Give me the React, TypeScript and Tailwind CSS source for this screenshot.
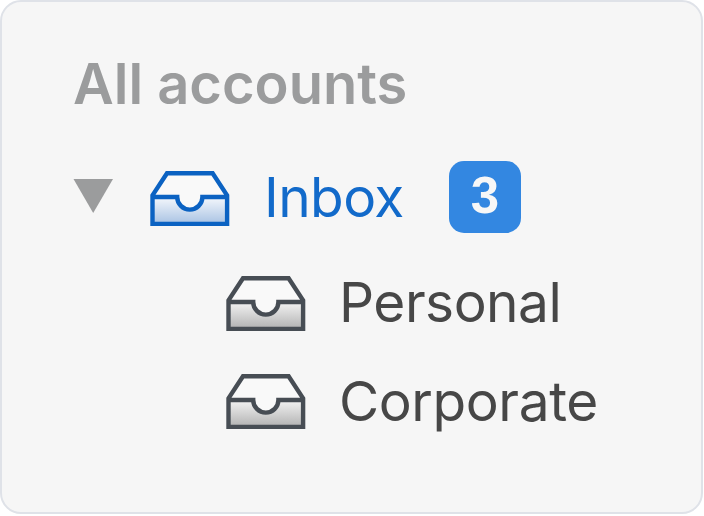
interface InboxIconProps {
	id: string;
	stroke: string;
	from: string;
	to: string;
}

interface Account {
	id: string;
	name: string;
	className: string;
}

const accounts: Account[] = [
	{
		id: 'personal',
		name: 'Personal',
		className: 'pb-1 tracking-[-0.5px]'
	},
	{
		id: 'corporate',
		name: 'Corporate',
		className: 'pb-0.5 tracking-[-0.4px]'
	}
];

function InboxIcon({ id, stroke, from, to }: InboxIconProps) {
	return (
		<svg viewBox="0 0 80 56" className="h-14 w-20 shrink-0" fill="none">
			<defs>
				<linearGradient id={id} x1="0" y1="26" x2="0" y2="53" gradientUnits="userSpaceOnUse">
					<stop offset="0" stopColor={from} />
					<stop offset="1" stopColor={to} />
				</linearGradient>
			</defs>
			<path d="M2.5 24.7 17 2.2h45.6l14.5 22.5V40H2.5Z" fill="#f9f9f9" />
			<path
				d="M2.5 26h24.7a12.6 12.6 0 0 0 25.2 0h24.7v26.9H2.5Z"
				fill={`url(#${id})`}
			/>
			<path
				d="M2.5 26h24.7a12.6 12.6 0 0 0 25.2 0h24.7M2.5 24.3v28.6h74.6V24.3L62.6 2.2H17L2.5 24.3Z"
				stroke={stroke}
				strokeWidth="4.4"
			/>
		</svg>
	);
}

export default function App() {
	return (
		<main className="h-[516px] w-[704px] bg-white font-['Inter',sans-serif]">
			<section className="h-[514px] w-[703px] rounded-[21px] border-2 border-[#dfe2e8] bg-[#f6f6f6] pt-[49px] pl-[71px]">
				<h1 className="h-[68px] text-[56px] leading-[67px] font-semibold whitespace-nowrap text-[#9b9c9d]">
					All accounts
				</h1>
				<div className="mt-[40px] flex h-[76px] items-center">
					<svg viewBox="0 0 40 34" className="mb-0.5 h-[34px] w-10 shrink-0">
						<path d="M0.5 0H40L20.2 34Z" fill="#9b9c9d" />
					</svg>
					<div className="ml-[37px] mt-1 flex">
						<InboxIcon id="inbox" stroke="#0b62c2" from="#f5f8fc" to="#a8c2e3" />
					</div>
					<span className="ml-[34px] w-[139px] text-[55px] leading-[76px] tracking-[-0.6px] text-[#126aca]">
						Inbox
					</span>
					<span className="ml-[46px] flex size-18 items-center justify-center rounded-[15px] bg-[#3387e1] pb-0.5 font-['Liberation_Sans',sans-serif] text-[51px] font-bold text-[#f7f7f7]">
						3
					</span>
				</div>
				<ul className="mt-5 ml-[153px]">
					{accounts.map((account) => (
						<li key={account.id} className="flex h-[98px] items-center">
							<InboxIcon
								id={account.id}
								stroke="#474d54"
								from="#f4f4f4"
								to="#b1b1b1"
							/>
							<span
								className={`ml-[33px] text-[55px] leading-[94px] text-[#474747] ${account.className}`}>
								{account.name}
							</span>
						</li>
					))}
				</ul>
			</section>
		</main>
	);
}
